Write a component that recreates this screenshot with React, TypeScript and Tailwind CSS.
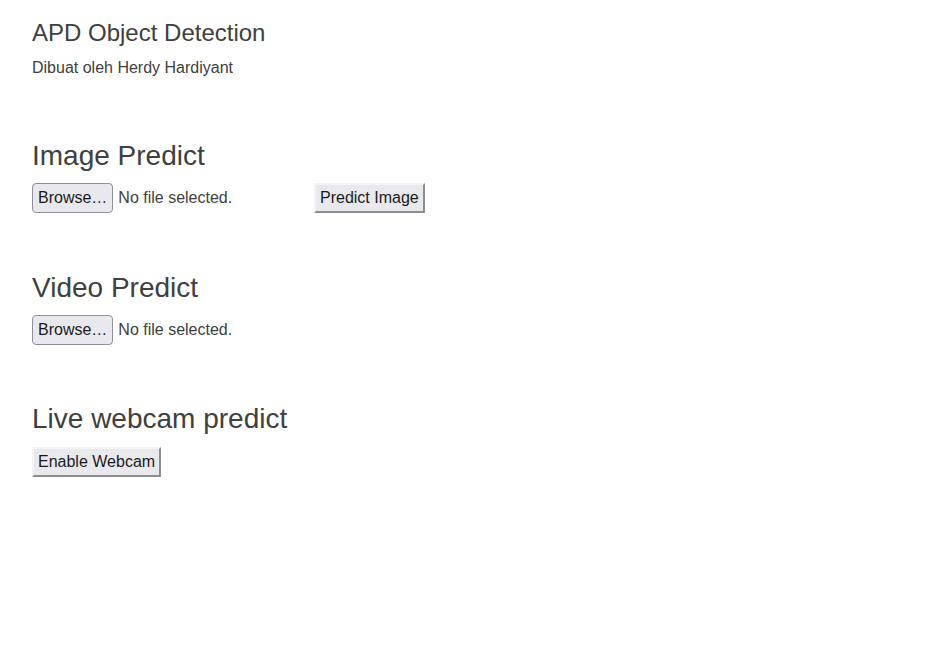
import React from "react";

const font = { fontFamily: '"Liberation Sans", Arial, sans-serif' };

function FileInput() {
  return (
    <div className="flex items-center w-[278px]">
      <button className="h-[30px] px-[5px] border border-[#8f8f9d] rounded-[4px] bg-[#e9e9ed] text-[16px] text-[#1b1b1b] leading-none">
        Browse…
      </button>
      <span className="ml-[5px] text-[16px] text-[#404040]">No file selected.</span>
    </div>
  );
}

function OutsetButton({ children }: { children: React.ReactNode }) {
  return (
    <button className="h-[30px] px-1 border-2 border-t-[#f4f4f6] border-l-[#f4f4f6] border-r-[#8d8d8d] border-b-[#8d8d8d] bg-[#e9e9ed] text-[16px] text-[#1b1b1b] leading-none">
      {children}
    </button>
  );
}

export default function App() {
  return (
    <div className="min-h-[665px] bg-white px-8 pt-[19px] text-[#404040]" style={font}>
      <h1 className="text-[24px] leading-[28px]">APD Object Detection</h1>
      <p className="mt-[9px] text-[16px] leading-[24px]">Dibuat oleh Herdy Hardiyant</p>

      <h2 className="mt-[59px] text-[28px] leading-[34px]">Image Predict</h2>
      <div className="mt-[10px] flex items-center">
        <FileInput />
        <div className="ml-1">
          <OutsetButton>Predict Image</OutsetButton>
        </div>
      </div>

      <h2 className="mt-[58px] text-[28px] leading-[34px]">Video Predict</h2>
      <div className="mt-[10px] flex items-center">
        <FileInput />
      </div>

      <h2 className="mt-[57px] text-[28px] leading-[34px]">Live webcam predict</h2>
      <div className="mt-[11px] flex items-center">
        <OutsetButton>Enable Webcam</OutsetButton>
      </div>
    </div>
  );
}
